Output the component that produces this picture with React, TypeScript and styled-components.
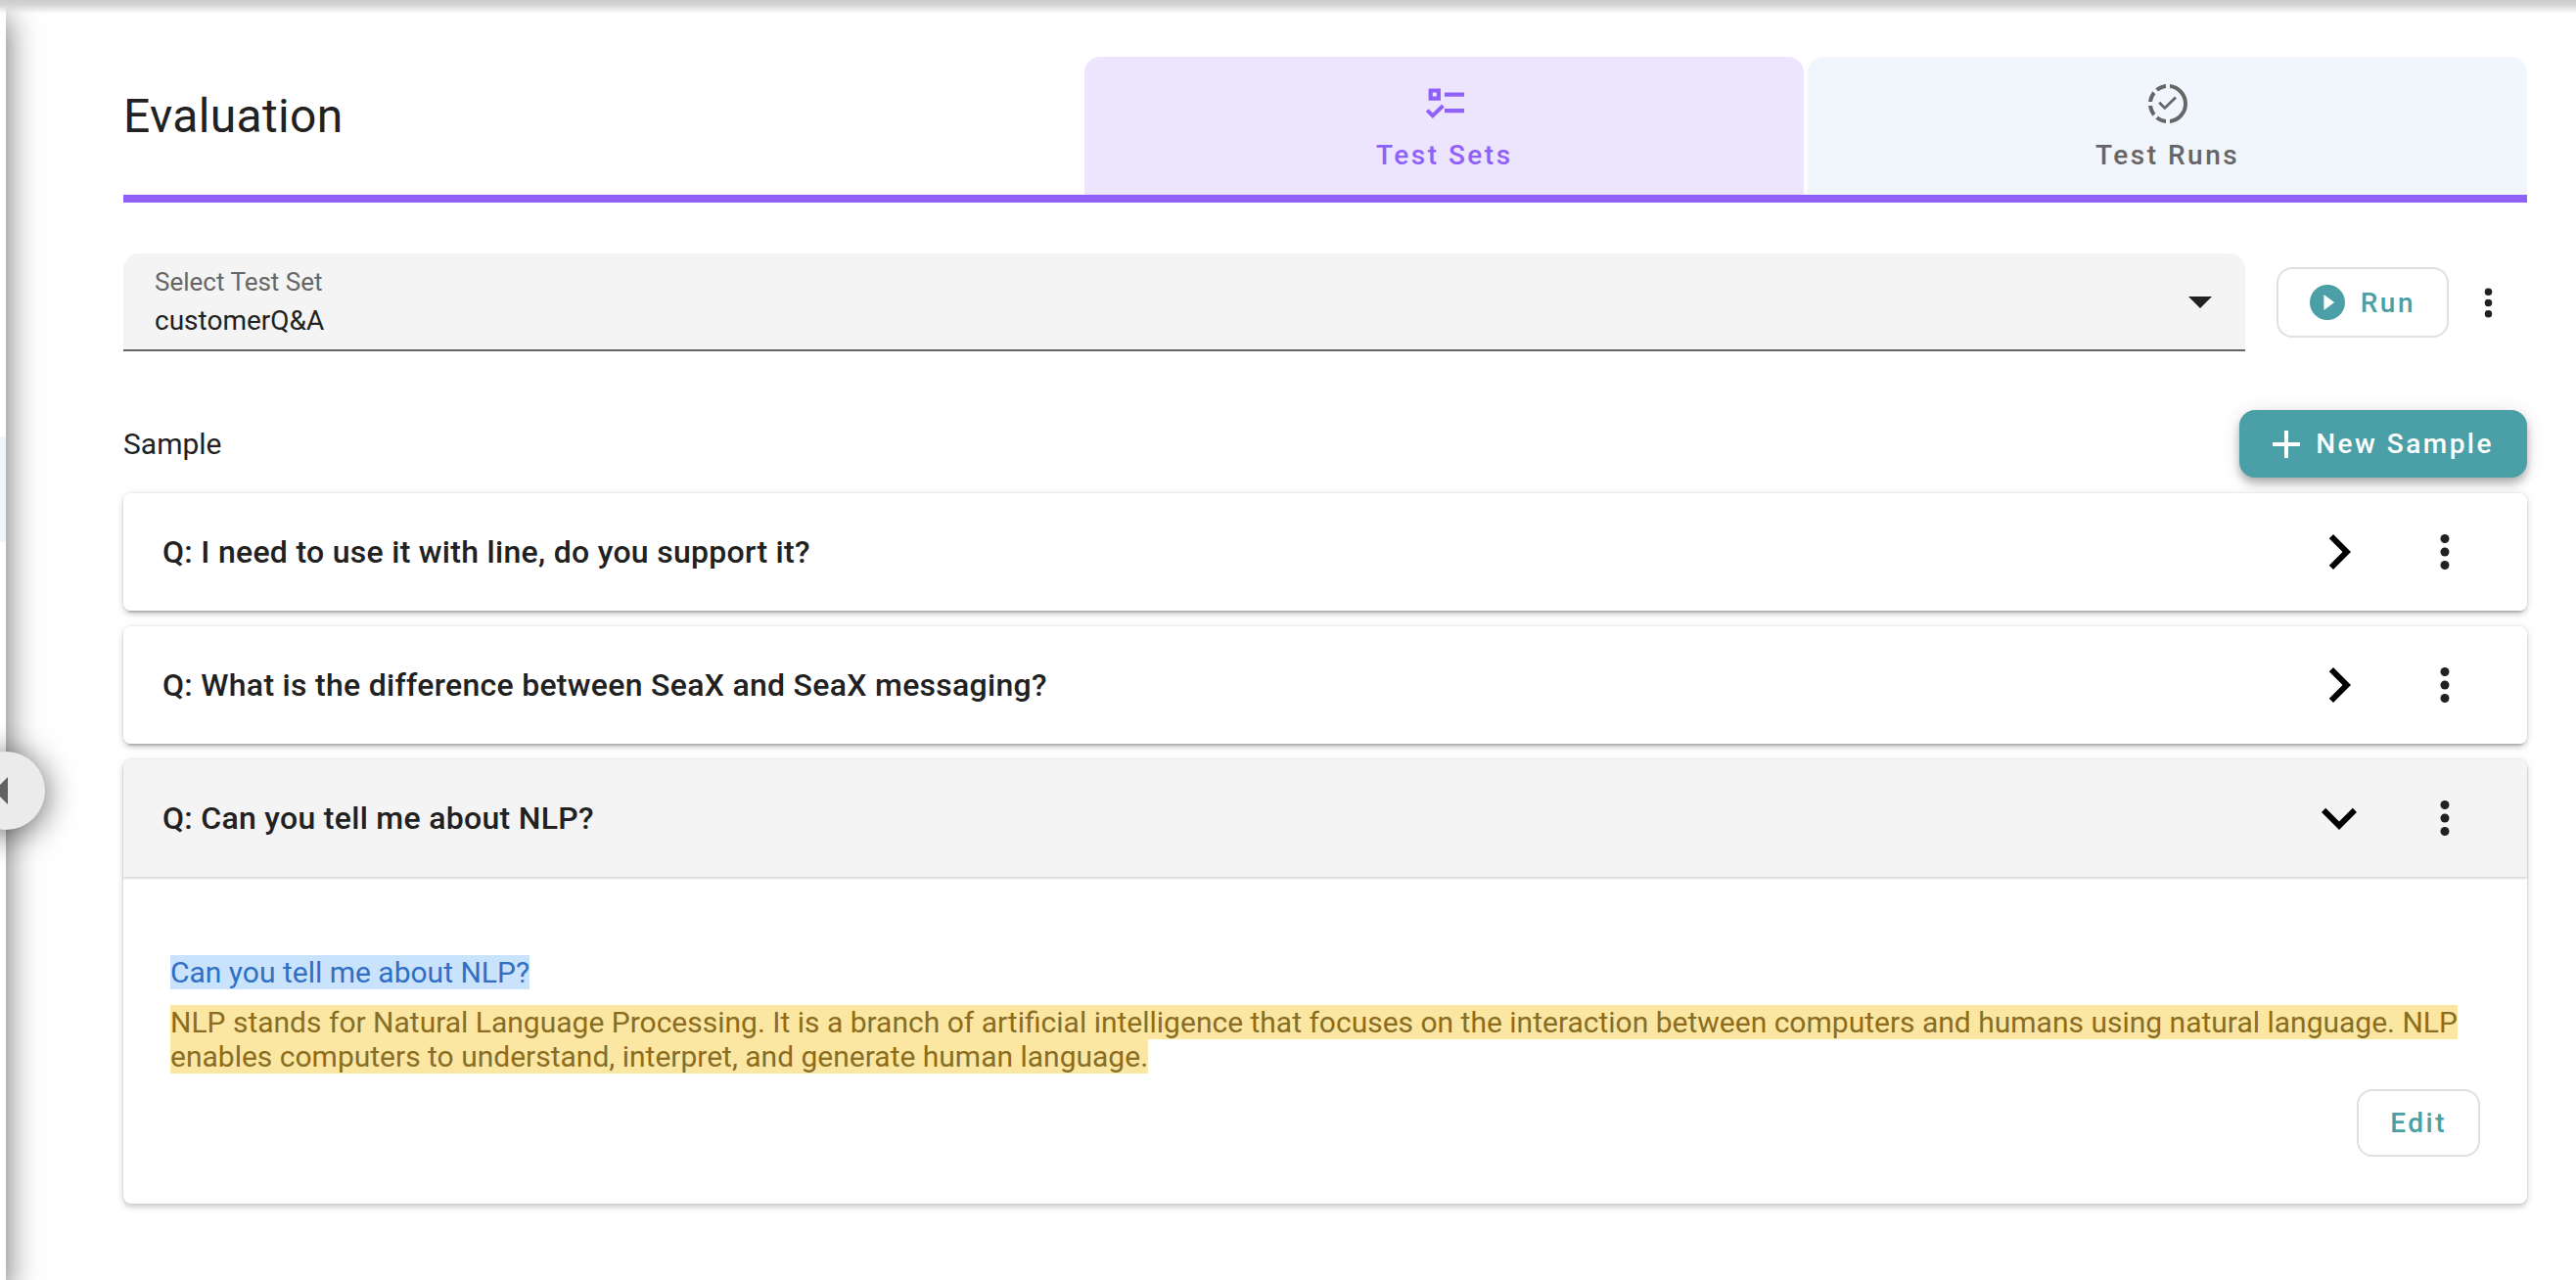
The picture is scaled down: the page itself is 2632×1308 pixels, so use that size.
import React, { useId, useState } from "react";
import styled, { createGlobalStyle, css } from "styled-components";

const color = {
  text: "#212121",
  muted: "#666666",
  purple: "#9061f9",
  purpleSoft: "#ede5fe",
  blueSoft: "#f1f5fc",
  teal: "#4b9fa6",
  surface: "#f4f4f4",
  line: "#e0e0e0",
};

const elevation = {
  flat: "0 0 2px 0 rgba(0,0,0,.14), 0 4px 4px 0 rgba(0,0,0,.1), 0 2px 10px 0 rgba(0,0,0,.12)",
  card: "0 0 2px 0 rgba(0,0,0,.14), 0 6px 2px -4px rgba(0,0,0,.16), 0 4px 4px 0 rgba(0,0,0,.1), 0 2px 10px 0 rgba(0,0,0,.12)",
  button: "0 4px 8px -2px rgba(0,0,0,.2), 0 8px 10px 0 rgba(0,0,0,.14), 0 2px 20px 0 rgba(0,0,0,.12)",
  knob: "0 4px 32px 2px rgba(0,0,0,.55)",
  drawer: "0 16px 32px 0 rgba(0,0,0,.6)",
};

const GlobalStyle = createGlobalStyle`
  *, *::before, *::after { box-sizing: border-box; }
  body {
    margin: 0;
    background: #fff;
    color: ${color.text};
    font-family: Roboto, "Liberation Sans", sans-serif;
    font-size: 30px;
    line-height: 35px;
    overflow: hidden;
  }
  h1, h2, h3, p { margin: 0; font: inherit; }
  button, select { font: inherit; color: inherit; }
`;

const Shell = styled.div`
  display: flex;
  min-height: 100vh;
  position: relative;
  overflow: hidden;
`;

const TopShade = styled.div`
  position: absolute;
  inset: 0 0 auto;
  height: 14px;
  background: linear-gradient(#cccccc, #d4d4d4 35%, rgba(255, 255, 255, 0));
`;

const Drawer = styled.aside`
  flex: 0 0 512px;
  margin-left: -506px;
  padding-top: 446px;
  background: #fff;
  box-shadow: ${elevation.drawer};
`;

const DrawerItem = styled.div`
  height: 108px;
  background: #eff6f9;
`;

const CollapseButton = styled.button`
  position: absolute;
  top: 768px;
  left: -34px;
  width: 80px;
  height: 80px;
  display: grid;
  place-items: center;
  padding: 0;
  border: 0;
  border-radius: 50%;
  background: #ebebeb;
  color: #616161;
  box-shadow: ${elevation.knob};
`;

const Page = styled.main`
  flex: 1;
  min-width: 0;
  padding: 58px 50px 78px 120px;
`;

const Header = styled.header`
  display: grid;
  grid-template-columns: 2fr 3fr;
  border-bottom: 8px solid ${color.purple};
`;

const Title = styled.h1`
  padding-top: 33px;
  font-size: 48px;
  line-height: 56px;
  letter-spacing: 0.007em;
`;

const Tabs = styled.nav`
  display: grid;
  grid-template-columns: 1fr 1fr;
  gap: 4px;
`;

const labelText = css`
  font-size: 28px;
  line-height: 33px;
  font-weight: 500;
  letter-spacing: 0.089em;
`;

const Tab = styled.button<{ $active: boolean }>`
  ${labelText}
  display: flex;
  flex-direction: column;
  align-items: center;
  gap: 12px;
  padding: 24px 16px;
  border: 0;
  border-radius: 16px 16px 0 0;
  background: ${(p) => (p.$active ? color.purpleSoft : color.blueSoft)};
  color: ${(p) => (p.$active ? color.purple : color.muted)};
`;

const Picker = styled.section`
  display: flex;
  align-items: center;
  margin-top: 52px;
`;

const Field = styled.div`
  flex: 1;
  display: grid;
  position: relative;
  border-bottom: 2px solid ${color.muted};
  border-radius: 16px 16px 0 0;
  background: ${color.surface};
`;

const FieldLabel = styled.label`
  grid-area: 1 / 1;
  padding: 14px 32px 0;
  font-size: 26px;
  line-height: 30px;
  color: ${color.muted};
  pointer-events: none;
  z-index: 1;
`;

const Select = styled.select`
  grid-area: 1 / 1;
  height: 98px;
  padding: 38px 28px 0 32px;
  border: 0;
  appearance: none;
  background: transparent;
  font-size: 28px;
`;

const Caret = styled.svg`
  grid-area: 1 / 1;
  align-self: center;
  justify-self: end;
  margin: 2px 34px 0 0;
  pointer-events: none;
`;

const Button = styled.button<{ $filled?: boolean }>`
  ${labelText}
  display: inline-flex;
  align-items: center;
  gap: 16px;
  padding: 16px 32px;
  border: 2px solid ${(p) => (p.$filled ? color.teal : color.line)};
  border-radius: 16px;
  background: ${(p) => (p.$filled ? color.teal : "#fff")};
  color: ${(p) => (p.$filled ? "#fff" : color.teal)};
  box-shadow: ${(p) => (p.$filled ? elevation.button : "none")};
`;

const RunButton = styled(Button)`
  margin-left: 32px;
`;

const IconButton = styled.button`
  display: grid;
  place-items: center;
  padding: 0;
  border: 0;
  background: none;
  width: 80px;
`;

const SampleBar = styled.div`
  display: flex;
  align-items: center;
  justify-content: space-between;
  margin: 60px 0 16px;
`;

const SampleList = styled.ul`
  display: grid;
  gap: 16px;
  margin: 0;
  padding: 0;
  list-style: none;
`;

const Card = styled.li<{ $open: boolean }>`
  border-radius: 8px;
  background: #fff;
  box-shadow: ${(p) => (p.$open ? elevation.flat : elevation.card)};
`;

const CardHead = styled.div<{ $open: boolean }>`
  display: flex;
  align-items: center;
  height: 120px;
  padding: 0 44px 0 40px;
  border-radius: ${(p) => (p.$open ? "8px 8px 0 0" : "8px")};
  background: ${(p) => (p.$open ? color.surface : "#fff")};
  box-shadow: ${(p) => (p.$open ? "0 2px 2px rgba(0,0,0,.14)" : "none")};
`;

const Question = styled.h3`
  flex: 1;
  font-size: 32px;
  line-height: 36px;
  font-weight: 500;
  letter-spacing: 0.009em;
`;

const ToggleButton = styled(IconButton)`
  margin-right: 28px;
  color: #000;
`;

const CardBody = styled.div`
  display: grid;
  gap: 16px;
  padding: 80px 48px 48px;
`;

const Mark = styled.mark<{ $kind: "question" | "answer" }>`
  background: ${(p) => (p.$kind === "question" ? "#c9e3fc" : "#fbe7a1")};
  color: ${(p) => (p.$kind === "question" ? "#2f6fc4" : "#8a6d22")};
`;

const Actions = styled.div`
  display: flex;
  justify-content: flex-end;
`;

const ListChecksIcon = () => (
  <svg width="48" height="48" viewBox="0 0 24 24" fill="currentColor" aria-hidden="true">
    <path d="M3.8,4.2H10V10.4H3.8V4.2M5.9,6.3V8.3H7.9V6.3H5.9M12,6.3H22V8.4H12V6.3M12,14.5H22V16.6H12V14.5M5.9,19.5L2.4,16L3.8,14.6L5.9,16.7L10.5,12.3L11.9,13.7L5.9,19.5Z" />
  </svg>
);

const ProgressCheckIcon = () => (
  <svg width="48" height="48" viewBox="0 0 24 24" fill="currentColor" aria-hidden="true">
    <path d="M13 2.05V4.06A8 8 0 0 1 13 19.94V21.95A10 10 0 0 0 13 2.05M11 2.06C9.05 2.25 7.19 3 5.67 4.26L7.1 5.74C8.22 4.84 9.57 4.26 11 4.06V2.06M4.26 5.67C3 7.19 2.25 9.04 2.05 11H4.05C4.24 9.58 4.8 8.23 5.69 7.1L4.26 5.67M2.06 13C2.26 14.96 3.03 16.81 4.27 18.33L5.69 16.9C4.81 15.77 4.24 14.42 4.06 13H2.06M7.1 18.37L5.67 19.74C7.18 21 9.04 21.79 11 22V20C9.58 19.82 8.23 19.25 7.1 18.37" />
    <path d="M7.6 11.4L10.4 14.2L16 8.7" fill="none" stroke="currentColor" strokeWidth="1.4" />
  </svg>
);

const PlayCircleIcon = () => (
  <svg width="36" height="36" viewBox="2 2 20 20" fill="currentColor" aria-hidden="true">
    <path d="M10,16.5V7.5L16,12M12,2A10,10 0 0,0 2,12A10,10 0 0,0 12,22A10,10 0 0,0 22,12A10,10 0 0,0 12,2Z" />
  </svg>
);

const PlusIcon = () => (
  <svg width="28" height="28" viewBox="5 5 14 14" fill="currentColor" aria-hidden="true">
    <path d="M19,13H13V19H11V13H5V11H11V5H13V11H19V13Z" />
  </svg>
);

const DotsIcon = ({ size }: { size: number }) => (
  <svg width={size} height={size} viewBox="0 0 24 24" fill={color.text} aria-hidden="true">
    <circle cx="12" cy="6" r="2" />
    <circle cx="12" cy="12" r="2" />
    <circle cx="12" cy="18" r="2" />
  </svg>
);

const ChevronIcon = ({ open }: { open: boolean }) => (
  <svg width="72" height="72" viewBox="0 0 24 24" fill="currentColor" aria-hidden="true">
    <path
      d={
        open
          ? "M7.41,8.58L12,13.17L16.59,8.58L18,10L12,16L6,10L7.41,8.58Z"
          : "M8.59,16.58L13.17,12L8.59,7.41L10,6L16,12L10,18L8.59,16.58Z"
      }
    />
  </svg>
);

type Sample = { question: string; answer: string };

const samples: Sample[] = [
  { question: "I need to use it with line, do you support it?", answer: "" },
  { question: "What is the difference between SeaX and SeaX messaging?", answer: "" },
  {
    question: "Can you tell me about NLP?",
    answer:
      "NLP stands for Natural Language Processing. It is a branch of artificial intelligence that focuses on the interaction between computers and humans using natural language. NLP enables computers to understand, interpret, and generate human language.",
  },
];

const tabs = [
  { label: "Test Sets", icon: <ListChecksIcon /> },
  { label: "Test Runs", icon: <ProgressCheckIcon /> },
];

export default function App() {
  const selectId = useId();
  const [tab, setTab] = useState(0);
  const [opened, setOpened] = useState(2);

  return (
    <Shell>
      <GlobalStyle />
      <Drawer>
        <DrawerItem />
      </Drawer>
      <Page>
        <Header>
          <Title>Evaluation</Title>
          <Tabs>
            {tabs.map((t, i) => (
              <Tab key={t.label} type="button" $active={tab === i} onClick={() => setTab(i)}>
                {t.icon}
                {t.label}
              </Tab>
            ))}
          </Tabs>
        </Header>

        <Picker>
          <Field>
            <FieldLabel htmlFor={selectId}>Select Test Set</FieldLabel>
            <Select id={selectId}>
              <option>customerQ&amp;A</option>
            </Select>
            <Caret width="24" height="12" viewBox="0 0 24 12" fill={color.text} aria-hidden="true">
              <path d="M0 0H24L12 12Z" />
            </Caret>
          </Field>
          <RunButton type="button">
            <PlayCircleIcon />
            Run
          </RunButton>
          <IconButton type="button" aria-label="Test set options">
            <DotsIcon size={45} />
          </IconButton>
        </Picker>

        <SampleBar>
          <h2>Sample</h2>
          <Button type="button" $filled>
            <PlusIcon />
            New Sample
          </Button>
        </SampleBar>

        <SampleList>
          {samples.map((s, i) => {
            const open = opened === i;
            return (
              <Card key={s.question} $open={open}>
                <CardHead $open={open}>
                  <Question>Q: {s.question}</Question>
                  <ToggleButton
                    type="button"
                    aria-label="Toggle sample"
                    aria-expanded={open}
                    onClick={() => setOpened(open ? -1 : i)}
                  >
                    <ChevronIcon open={open} />
                  </ToggleButton>
                  <IconButton type="button" aria-label="Sample options">
                    <DotsIcon size={54} />
                  </IconButton>
                </CardHead>
                {open && (
                  <CardBody>
                    <p>
                      <Mark $kind="question">{s.question}</Mark>
                    </p>
                    <p>
                      <Mark $kind="answer">{s.answer}</Mark>
                    </p>
                    <Actions>
                      <Button type="button">Edit</Button>
                    </Actions>
                  </CardBody>
                )}
              </Card>
            );
          })}
        </SampleList>
      </Page>
      <TopShade />
      <CollapseButton type="button" aria-label="Collapse menu">
        <svg width="28" height="28" viewBox="0 0 28 28" fill="currentColor" aria-hidden="true">
          <path d="M16 0V28L2 14Z" />
        </svg>
      </CollapseButton>
    </Shell>
  );
}
